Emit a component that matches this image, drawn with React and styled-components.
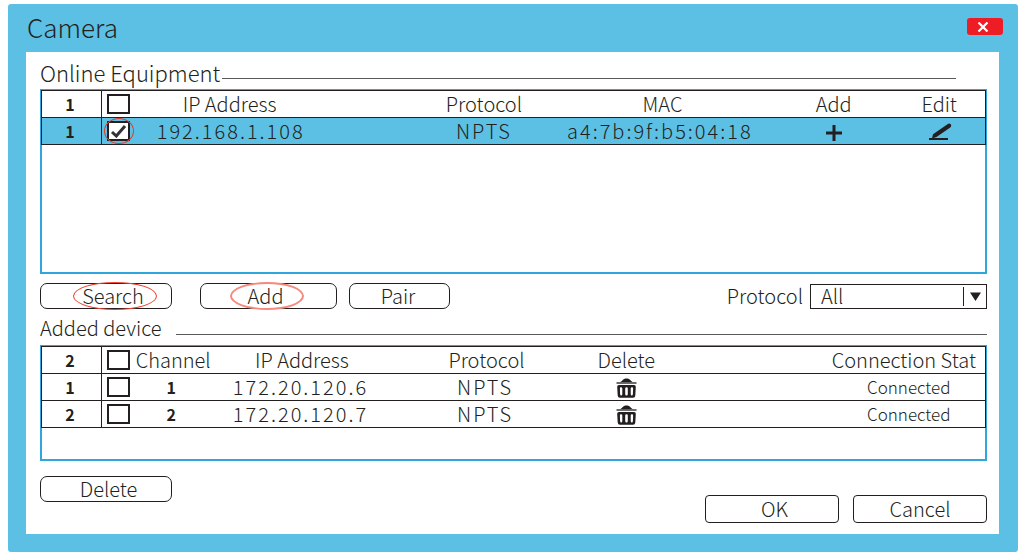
import React from "react";
import styled, { createGlobalStyle } from "styled-components";

const blue = "#5cc0e4";
const frameBlue = "#2fa6dc";
const ink = "#231f20";

const GlobalStyle = createGlobalStyle`
  *, *::before, *::after { box-sizing: border-box; }
  body {
    margin: 0;
    background: #fff;
    color: ${ink};
    font-family: "Noto Sans CJK SC", "Noto Sans", sans-serif;
    font-weight: 300;
    font-size: 20px;
    line-height: 24px;
  }
  button, select, input { font: inherit; color: inherit; margin: 0; }
`;

const Page = styled.main`
  display: flex;
  min-height: 100vh;
  padding: 4px 3px 7px 8px;
`;

const Window = styled.section`
  flex: 1;
  display: flex;
  flex-direction: column;
  padding: 0 19px 18px 18px;
  border-radius: 3px;
  background: ${blue};
`;

const TitleBar = styled.header`
  display: flex;
  align-items: center;
  justify-content: space-between;
  height: 48px;
`;

const Title = styled.h1`
  margin: 0 0 3px 1px;
  font-size: 26px;
  line-height: 32px;
  font-weight: inherit;
`;

const CloseButton = styled.button`
  display: flex;
  align-items: center;
  justify-content: center;
  width: 36px;
  height: 17px;
  margin: 0 -4px 3px 0;
  padding: 0 4px 0 0;
  border: 0;
  border-radius: 3px;
  background: #ee1c25;
`;

const Panel = styled.div`
  flex: 1;
  display: flex;
  flex-direction: column;
  padding: 8px 12px 11px 14px;
  background: #fff;
`;

const SectionHeading = styled.div`
  display: flex;
  align-items: flex-start;
  gap: ${(p) => p.$gap}px;
  padding: ${(p) => p.$top || 0}px ${(p) => p.$inset || 0}px 5px 0;

  h2 {
    margin: 0;
    font-size: ${(p) => p.$size}px;
    font-weight: inherit;
    line-height: 24px;
    white-space: nowrap;
  }
  &::after {
    content: "";
    flex: 1;
    height: 1px;
    margin-top: 18px;
    background: #58595b;
  }
`;

const Frame = styled.div`
  min-height: ${(p) => p.$minHeight}px;
  border: 2px solid ${frameBlue};
`;

const Table = styled.table`
  width: calc(100% + 2px);
  margin: -1px;
  table-layout: fixed;
  border-collapse: collapse;
  border: 1px solid ${ink};
`;

const Row = styled.tr`
  height: 27px;
  background: ${(p) => (p.$selected ? blue : "#fff")};
  border-bottom: 1px solid ${ink};
`;

const HeadCell = styled.th`
  padding: 0 ${(p) => p.$right || 0}px 0 ${(p) => p.$left || 0}px;
  font-weight: inherit;
  white-space: nowrap;
`;

const Cell = styled.td`
  padding: 0 ${(p) => p.$right || 0}px 0 ${(p) => p.$left || 0}px;
  text-align: center;
  white-space: nowrap;
`;

const CodeCell = styled(Cell)`
  letter-spacing: 2px;
`;

const NumberCell = styled(Cell)`
  font-size: 16px;
  font-weight: 700;
`;

const IndexCell = styled(NumberCell)`
  padding-right: 3px;
  border-right: 1px solid ${ink};
`;

const StatusCell = styled(Cell)`
  font-size: 17px;
`;

const CheckWrap = styled.label`
  position: relative;
  display: block;
  width: 23px;
  height: 20px;
  margin-left: 5px;

  svg { position: absolute; pointer-events: none; }
`;

const CheckBox = styled.input`
  appearance: none;
  display: block;
  width: 23px;
  height: 20px;
  border: 2px solid ${ink};
  background: #fff;

  & + svg { top: 3px; left: 3px; visibility: hidden; }
  &:checked + svg { visibility: visible; }
`;

const CheckRing = styled.span`
  position: absolute;
  inset: -3px -4px -3px -3px;
  border: 1px solid #d8402f;
  border-radius: 50%;
  pointer-events: none;
`;

const IconButton = styled.button`
  display: inline-flex;
  align-items: center;
  justify-content: center;
  vertical-align: middle;
  height: 22px;
  padding: 0 0 2px;
  border: 0;
  background: none;
`;

const Toolbar = styled.div`
  display: flex;
  align-items: center;
  padding-top: 9px;
`;

const Spacer = styled.div`
  width: ${(p) => p.$width}px;
  flex: ${(p) => (p.$width ? "none" : 1)};
`;

const Button = styled.button`
  position: relative;
  width: ${(p) => p.$width}px;
  height: ${(p) => p.$height || 26}px;
  padding: 0 ${(p) => p.$right || 0}px 0 ${(p) => p.$left || 0}px;
  border: 1px solid ${ink};
  border-radius: ${(p) => p.$radius || 7}px;
  background: #fff;
  line-height: 22px;
`;

const ButtonRing = styled.span`
  position: absolute;
  top: -2px;
  bottom: -2px;
  left: ${(p) => p.$left}px;
  width: ${(p) => p.$width}px;
  border: ${(p) => (p.$soft ? "2px solid #f58a7c" : "1px solid #ef3e2b")};
  border-radius: 50%;
  pointer-events: none;
`;

const FilterLabel = styled.label`
  margin-right: 7px;
`;

const SelectBox = styled.div`
  position: relative;
  width: 177px;

  svg {
    position: absolute;
    top: 0;
    right: 0;
    pointer-events: none;
  }
`;

const Select = styled.select`
  appearance: none;
  display: block;
  width: 100%;
  height: 25px;
  padding: 0 30px 0 10px;
  border: 1px solid ${ink};
  border-radius: 0;
  background: #fff;
  line-height: 22px;
`;

const Footer = styled.footer`
  flex: 1;
  display: flex;
  align-items: flex-end;
  gap: 14px;
  min-height: 62px;
  padding-top: 15px;
`;

const FooterStart = styled.div`
  display: flex;
  flex: 1;
  align-self: flex-start;
`;

function Check({ label, checked, ringed }) {
  return (
    <CheckWrap>
      <CheckBox type="checkbox" aria-label={label} defaultChecked={checked} />
      <svg width="17" height="14" viewBox="0 0 17 14" aria-hidden="true">
        <path d="M2 8 L6.3 12 L15 2" fill="none" stroke="#333" strokeWidth="3" />
      </svg>
      {ringed && <CheckRing />}
    </CheckWrap>
  );
}

function PlusIcon() {
  return (
    <svg width="16" height="18" viewBox="0 -2 16 18" aria-hidden="true">
      <path d="M0 8H16M8 0V16" stroke={ink} strokeWidth="3" />
    </svg>
  );
}

function PencilIcon() {
  return (
    <svg width="23" height="18" viewBox="0 0 23 18" aria-hidden="true">
      <path d="M18.5 1.2Q20 0 21.600 1Q23 2.400 21.600 4.200L7.500 14L3 15.500L4 11.200Z" fill={ink} />
      <path d="M0 16H19" stroke={ink} strokeWidth="2" />
    </svg>
  );
}

function TrashIcon() {
  return (
    <svg width="21" height="20" viewBox="0 0 21 20" aria-hidden="true">
      <path d="M4 4.2C6.5 3.2 6.5 0.4 10.5 0.4S14.500 3.200 17 4.200Z" fill={ink} />
      <path d="M0.500 5H20.500" stroke="#4a4748" strokeWidth="1.600" />
      <path
        fillRule="evenodd"
        fill={ink}
        d="M3 7H18Q20 7 19.800 9L19.300 17.500Q19.200 19.800 17 19.800H4Q1.900 19.800 1.700 17.500L1.200 9Q1 7 3 7ZM5 9.200Q3.800 9.200 3.900 10.600L4.100 16Q4.200 17.600 5.200 17.600Q6.300 17.600 6.300 16V10.600Q6.300 9.200 5 9.200ZM10.500 9.200Q9.200 9.200 9.200 10.600V16Q9.200 17.600 10.500 17.600T11.800 16V10.600Q11.800 9.200 10.500 9.200ZM16 9.200Q14.700 9.200 14.700 10.600V16Q14.700 17.600 15.800 17.600Q16.800 17.600 16.900 16L17.100 10.600Q17.200 9.200 16 9.200Z"
      />
    </svg>
  );
}

const onlineColumns = ["60px", "36px", "27.9%", "17.6%", "19.6%", "17.3%", "auto"];
const addedColumns = ["60px", "32px", "8.4%", "18.9%", "20.2%", "9.4%", "auto"];

const added = [
  { id: 1, ip: "172.20.120.6" },
  { id: 2, ip: "172.20.120.7" },
];

function Columns({ widths }) {
  return (
    <colgroup>
      {widths.map((width, i) => (
        <col key={i} style={{ width }} />
      ))}
    </colgroup>
  );
}

export default function App() {
  return (
    <Page>
      <GlobalStyle />
      <Window>
        <TitleBar>
          <Title>Camera</Title>
          <CloseButton aria-label="Close">
            <svg width="12" height="10" viewBox="0 0 12 10" aria-hidden="true">
              <path d="M1.500 0.500L10.500 9.500M10.500 0.500L1.500 9.500" stroke="#fff" strokeWidth="2.200" />
            </svg>
          </CloseButton>
        </TitleBar>
        <Panel>
          <SectionHeading $gap={2} $inset={31} $size={22}>
            <h2>Online Equipment</h2>
          </SectionHeading>
          <Frame $minHeight={185}>
            <Table>
              <Columns widths={onlineColumns} />
              <thead>
                <Row>
                  <IndexCell>1</IndexCell>
                  <Cell><Check label="Select all online equipment" /></Cell>
                  <HeadCell $right={79}>IP Address</HeadCell>
                  <HeadCell>Protocol</HeadCell>
                  <HeadCell $left={6}>MAC</HeadCell>
                  <HeadCell>Add</HeadCell>
                  <HeadCell $right={22}>Edit</HeadCell>
                </Row>
              </thead>
              <tbody>
                <Row $selected>
                  <IndexCell>1</IndexCell>
                  <Cell><Check label="Select 192.168.1.108" checked ringed /></Cell>
                  <CodeCell $right={77}>192.168.1.108</CodeCell>
                  <CodeCell>NPTS</CodeCell>
                  <CodeCell $right={4}>a4:7b:9f:b5:04:18</CodeCell>
                  <Cell><IconButton aria-label="Add 192.168.1.108"><PlusIcon /></IconButton></Cell>
                  <Cell $right={20}><IconButton aria-label="Edit 192.168.1.108"><PencilIcon /></IconButton></Cell>
                </Row>
              </tbody>
            </Table>
          </Frame>
          <Toolbar>
            <Button $width={132} $left={14}>Search<ButtonRing $left={32} $width={84} /></Button>
            <Spacer $width={28} />
            <Button $width={137} $right={6}>Add<ButtonRing $left={29} $width={74} $soft /></Button>
            <Spacer $width={12} />
            <Button $width={101} $right={3}>Pair</Button>
            <Spacer />
            <FilterLabel htmlFor="protocol">Protocol</FilterLabel>
            <SelectBox>
              <Select id="protocol" defaultValue="All">
                <option>All</option>
              </Select>
              <svg width="25" height="25" viewBox="0 0 25 25" aria-hidden="true">
                <path d="M1.500 3V22" stroke={ink} />
                <path d="M8 8.500H19L13.500 17Z" fill={ink} />
              </svg>
            </SelectBox>
          </Toolbar>
          <SectionHeading $gap={14} $size={20} $top={7}>
            <h2>Added device</h2>
          </SectionHeading>
          <Frame $minHeight={116}>
            <Table>
              <Columns widths={addedColumns} />
              <thead>
                <Row>
                  <IndexCell>2</IndexCell>
                  <Cell><Check label="Select all added devices" /></Cell>
                  <HeadCell>Channel</HeadCell>
                  <HeadCell>IP Address</HeadCell>
                  <HeadCell>Protocol</HeadCell>
                  <HeadCell>Delete</HeadCell>
                  <HeadCell $left={152}>Connection Stat</HeadCell>
                </Row>
              </thead>
              <tbody>
                {added.map((device) => (
                  <Row key={device.id}>
                    <IndexCell>{device.id}</IndexCell>
                    <Cell><Check label={`Select channel ${device.id}`} /></Cell>
                    <NumberCell $right={4}>{device.id}</NumberCell>
                    <CodeCell $right={3}>{device.ip}</CodeCell>
                    <CodeCell $right={3}>NPTS</CodeCell>
                    <Cell>
                      <IconButton aria-label={`Delete channel ${device.id}`}><TrashIcon /></IconButton>
                    </Cell>
                    <StatusCell $left={162}>Connected</StatusCell>
                  </Row>
                ))}
              </tbody>
            </Table>
          </Frame>
          <Footer>
            <FooterStart>
              <Button $width={132} $left={5}>Delete</Button>
            </FooterStart>
            <Button $width={134} $height={28} $radius={4} $left={5}>OK</Button>
            <Button $width={134} $height={28} $radius={4}>Cancel</Button>
          </Footer>
        </Panel>
      </Window>
    </Page>
  );
}
